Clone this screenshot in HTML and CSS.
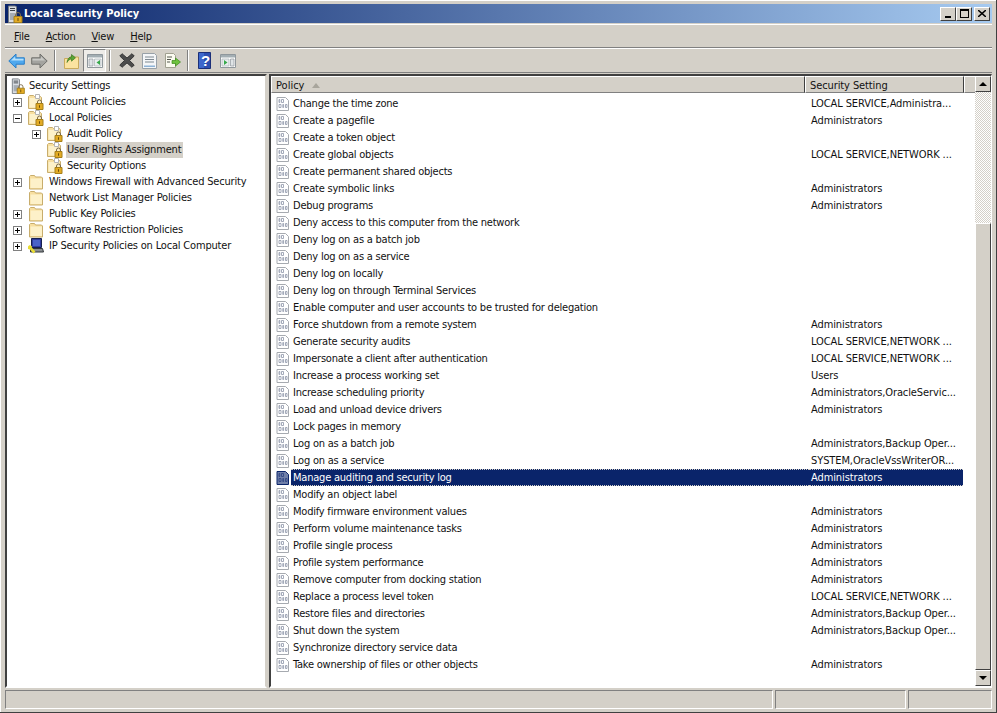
FILE: index.html
```html
<!DOCTYPE html>
<html lang="en">
<head>
  <meta charset="UTF-8" />
  <title>Local Security Policy</title>
  <link rel="stylesheet" href="styles.css">
</head>
<body>

  <!-- icon set -->
  <svg class="defs" width="0" height="0">
    <symbol id="i-folder" viewBox="0 0 16 16">
      <path d="M1.500 15V2.500l1-1h4l1 1.500h6l1 1V15z" fill="#f8dfa0" stroke="#c8ad6c"/>
      <path d="M2.500 4.500h11.500v9.500H2.500z" fill="#fdf1c9"/>
    </symbol>
    <symbol id="i-lockfolder" viewBox="0 0 16 16">
      <path d="M.5 14.500V2.500l1-1h4l1 1h6l1 1V14.500z" fill="#f8dfa0" stroke="#c8ad6c"/>
      <path d="M1.500 4h11v9.500h-11z" fill="#fdf1c9"/>
      <path d="M7.500.5h4v4h-4z" fill="#fff" stroke="#b5b5b5"/>
      <path d="M9.500 9.500V8a2 2 0 0 1 4 0v1.500" fill="none" stroke="#7a6a4c"/>
      <path d="M8 9.500h7v6H8z" fill="#e3ab24" stroke="#a57f1a"/>
      <path d="M11 11.300h1v2.500h-1z" fill="#6d4e08"/>
    </symbol>
    <symbol id="i-server" viewBox="0 0 16 18">
      <path d="M.5 1h7l1 1v14l-1 1.500h-7z" fill="#d9dde3" stroke="#73797f"/>
      <path d="M2 3.500h5M2 5.500h5" stroke="#3b4046"/>
      <path d="M2 8h5v7H2z" fill="#a6adb5"/>
      <path d="M7.500 11.500V10a2.500 2.500 0 0 1 5 0v1.500" fill="none" stroke="#7a6a4c"/>
      <path d="M6 11.500h8v6H6z" fill="#e3ab24" stroke="#a57f1a"/>
      <path d="M9.500 13h1v3h-1z" fill="#6d4e08"/>
    </symbol>
    <symbol id="i-ipsec" viewBox="0 0 16 16">
      <path d="M3.500.5h10v9h-10z" fill="#2f3b9f" stroke="#16204f"/>
      <path d="M5 2h7v6H5z" fill="#4a63c8"/>
      <path d="M2.500 10.500h12l1 3.500h-13z" fill="#8a8e92" stroke="#33373a"/>
      <path d="M.5 8l6 6.500" stroke="#e8dc34" stroke-width="2.600"/>
      <path d="M.5 11l3-3" stroke="#e8dc34" stroke-width="2"/>
    </symbol>
    <symbol id="i-policy" viewBox="0 0 16 16">
      <path d="M2 1.500h8.500l3 3v10H2z" fill="var(--page, #fff)" stroke="var(--edge, #a6aab0)"/>
      <path d="M4 3.500h.8v3H4zM6.500 3.500h2v3h-2zM4 8.500h2v3H4zM7.800 8.500h.8v3h-.8zM10.500 8.500h1.500v3h-1.500z" fill="none" stroke="var(--ink, #8d95a8)" stroke-width=".8"/>
    </symbol>
    <symbol id="i-back" viewBox="0 0 17 16">
      <path d="M.8 8L8 1v3.800h8.300v6.400H8V15z" fill="#4fa8ee" stroke="#2a7fc8"/>
      <path d="M3 7.500L7.200 3.500v2.200h8.300v1.800z" fill="#b5e0fb"/>
    </symbol>
    <symbol id="i-forward" viewBox="0 0 17 16">
      <path d="M16.200 8L9 1v3.800H.7v6.400H9V15z" fill="#a3a39f" stroke="#6f6f6b"/>
      <path d="M10 3.500v2.200H1.500v1.800h12.500z" fill="#c9c9c5"/>
    </symbol>
    <symbol id="i-up" viewBox="0 0 15 16">
      <path d="M.5 15.500V5.500h4L6 4h8.500v11.500z" fill="#fbe3a0" stroke="#c9aa5c"/>
      <path d="M3 9.500c.4-3.500 2-5.500 4.500-5.500V1.500l4 3.300-4 3.400V6C5.500 6 4 7.500 3 9.500z" fill="#5aa638" stroke="#2c6d14" stroke-width=".6"/>
    </symbol>
    <symbol id="i-tree" viewBox="0 0 16 14">
      <path d="M.5.500h15v13H.5z" fill="#fff" stroke="#8f979c"/>
      <path d="M1 1h14v2.500H1z" fill="#a3aeb3"/>
      <path d="M2 5h4v7H2z" fill="#dfe4e6" stroke="#8f979c" stroke-width=".7"/>
      <path d="M7.500 5H14v7H7.500z" fill="#e9edef" stroke="#a9b1b5" stroke-width=".7"/>
      <path d="M13 6v5l-3.500-2.500z" fill="#37a84a"/>
    </symbol>
    <symbol id="i-delete" viewBox="0 0 16 15">
      <path d="M.8 3L3 .7 8 5l5-4.300L15.200 3 10.500 7.500l4.700 4.500-2.200 2.300-5-4.400-5 4.400L.8 12l4.700-4.500z" fill="#4c4c4c" stroke="#383838"/>
    </symbol>
    <symbol id="i-props" viewBox="0 0 15 16">
      <path d="M.5.500h12l2 2v13H.5z" fill="#f4f6f8" stroke="#98a1a8"/>
      <path d="M3 4h9M3 6.500h9M3 9h9" stroke="#7f8a92"/>
      <path d="M2 12.500h11V14H2z" fill="#8eb3d6"/>
    </symbol>
    <symbol id="i-export" viewBox="0 0 16 16">
      <path d="M.5.500h8l2 2v12H.5z" fill="#fbfaf0" stroke="#a0a090"/>
      <path d="M2 4h5M2 6.500h4M2 9h3" stroke="#55584f"/>
      <path d="M7 7.500h3.500V5l5 4-5 4v-2.500H7z" fill="#6ec23e" stroke="#3c8a1a" stroke-width=".7"/>
    </symbol>
    <symbol id="i-help" viewBox="0 0 13 17">
      <path d="M.5.500h12v16H.5z" fill="#2c4fb0" stroke="#1b2f78"/>
      <path d="M1 1h5v15H1z" fill="#3d67cc"/>
    </symbol>
    <symbol id="i-pane" viewBox="0 0 16 14">
      <path d="M.5.500h15v13H.5z" fill="#fff" stroke="#8f979c"/>
      <path d="M1 1h14v2.500H1z" fill="#a3aeb3"/>
      <path d="M2 5h7v7H2z" fill="#e9edef" stroke="#a9b1b5" stroke-width=".7"/>
      <path d="M10.500 5H14v7h-3.500z" fill="#dfe4e6" stroke="#8f979c" stroke-width=".7"/>
      <path d="M4 6v5l3.500-2.500z" fill="#37a84a"/>
    </symbol>
  </svg>

  <div class="window">

    <div class="titlebar">
      <svg class="title-icon" width="16" height="18"><use href="#i-server"/></svg>
      <span class="title-text">Local Security Policy</span>
      <div class="caption-btns">
        <button class="cap"><span class="cap-min"></span></button>
        <button class="cap"><span class="cap-max"></span></button>
        <button class="cap cap-close">
          <svg width="8" height="7"><path d="M0 0l8 7M8 0L0 7" stroke="#000" stroke-width="1.500"/></svg>
        </button>
      </div>
    </div>

    <div class="menubar">
      <span class="menu"><u>F</u>ile</span>
      <span class="menu"><u>A</u>ction</span>
      <span class="menu"><u>V</u>iew</span>
      <span class="menu"><u>H</u>elp</span>
    </div>

    <div class="toolbar">
      <span class="tool"><svg width="17" height="16"><use href="#i-back"/></svg></span>
      <span class="tool"><svg width="17" height="16"><use href="#i-forward"/></svg></span>
      <span class="sep"></span>
      <span class="tool"><svg width="15" height="16"><use href="#i-up"/></svg></span>
      <span class="tool active"><svg width="16" height="14"><use href="#i-tree"/></svg></span>
      <span class="sep"></span>
      <span class="tool"><svg width="16" height="15"><use href="#i-delete"/></svg></span>
      <span class="tool"><svg width="15" height="16"><use href="#i-props"/></svg></span>
      <span class="tool"><svg width="16" height="16"><use href="#i-export"/></svg></span>
      <span class="sep"></span>
      <span class="tool"><svg width="13" height="17"><use href="#i-help"/></svg><b class="help-q">?</b></span>
      <span class="tool"><svg width="16" height="14"><use href="#i-pane"/></svg></span>
    </div>

    <div class="panes">
      <!-- left tree -->
      <div class="tree">
        <div class="tree-row lvl-0"><svg class="tree-icon" width="16" height="16"><use href="#i-server"/></svg><span class="tree-label">Security Settings</span></div>
        <div class="tree-row"><span class="exp plus"></span><svg class="tree-icon" width="16" height="16"><use href="#i-lockfolder"/></svg><span class="tree-label">Account Policies</span></div>
        <div class="tree-row"><span class="exp"></span><svg class="tree-icon" width="16" height="16"><use href="#i-lockfolder"/></svg><span class="tree-label">Local Policies</span></div>
        <div class="tree-row lvl-2"><span class="exp plus"></span><svg class="tree-icon" width="16" height="16"><use href="#i-lockfolder"/></svg><span class="tree-label">Audit Policy</span></div>
        <div class="tree-row lvl-2"><span class="exp none"></span><svg class="tree-icon" width="16" height="16"><use href="#i-lockfolder"/></svg><span class="tree-label current">User Rights Assignment</span></div>
        <div class="tree-row lvl-2"><span class="exp none"></span><svg class="tree-icon" width="16" height="16"><use href="#i-lockfolder"/></svg><span class="tree-label">Security Options</span></div>
        <div class="tree-row"><span class="exp plus"></span><svg class="tree-icon" width="16" height="16"><use href="#i-folder"/></svg><span class="tree-label">Windows Firewall with Advanced Security</span></div>
        <div class="tree-row"><span class="exp none"></span><svg class="tree-icon" width="16" height="16"><use href="#i-folder"/></svg><span class="tree-label">Network List Manager Policies</span></div>
        <div class="tree-row"><span class="exp plus"></span><svg class="tree-icon" width="16" height="16"><use href="#i-folder"/></svg><span class="tree-label">Public Key Policies</span></div>
        <div class="tree-row"><span class="exp plus"></span><svg class="tree-icon" width="16" height="16"><use href="#i-folder"/></svg><span class="tree-label">Software Restriction Policies</span></div>
        <div class="tree-row"><span class="exp plus"></span><svg class="tree-icon" width="16" height="16"><use href="#i-ipsec"/></svg><span class="tree-label">IP Security Policies on Local Computer</span></div>
      </div>

      <!-- right list -->
      <div class="list-pane">
        <div class="list-main">
          <div class="list-head">
            <div class="head-cell head-policy">Policy <span class="sort"></span></div>
            <div class="head-cell head-setting">Security Setting</div>
            <div class="head-fill"></div>
          </div>
          <div class="list-rows">
            <div class="row"><svg width="16" height="16"><use href="#i-policy"/></svg><span class="col-name">Change the time zone</span><span class="col-setting">LOCAL SERVICE,Administra...</span></div>
            <div class="row"><svg width="16" height="16"><use href="#i-policy"/></svg><span class="col-name">Create a pagefile</span><span class="col-setting">Administrators</span></div>
            <div class="row"><svg width="16" height="16"><use href="#i-policy"/></svg><span class="col-name">Create a token object</span><span class="col-setting"></span></div>
            <div class="row"><svg width="16" height="16"><use href="#i-policy"/></svg><span class="col-name">Create global objects</span><span class="col-setting">LOCAL SERVICE,NETWORK ...</span></div>
            <div class="row"><svg width="16" height="16"><use href="#i-policy"/></svg><span class="col-name">Create permanent shared objects</span><span class="col-setting"></span></div>
            <div class="row"><svg width="16" height="16"><use href="#i-policy"/></svg><span class="col-name">Create symbolic links</span><span class="col-setting">Administrators</span></div>
            <div class="row"><svg width="16" height="16"><use href="#i-policy"/></svg><span class="col-name">Debug programs</span><span class="col-setting">Administrators</span></div>
            <div class="row"><svg width="16" height="16"><use href="#i-policy"/></svg><span class="col-name">Deny access to this computer from the network</span><span class="col-setting"></span></div>
            <div class="row"><svg width="16" height="16"><use href="#i-policy"/></svg><span class="col-name">Deny log on as a batch job</span><span class="col-setting"></span></div>
            <div class="row"><svg width="16" height="16"><use href="#i-policy"/></svg><span class="col-name">Deny log on as a service</span><span class="col-setting"></span></div>
            <div class="row"><svg width="16" height="16"><use href="#i-policy"/></svg><span class="col-name">Deny log on locally</span><span class="col-setting"></span></div>
            <div class="row"><svg width="16" height="16"><use href="#i-policy"/></svg><span class="col-name">Deny log on through Terminal Services</span><span class="col-setting"></span></div>
            <div class="row"><svg width="16" height="16"><use href="#i-policy"/></svg><span class="col-name">Enable computer and user accounts to be trusted for delegation</span><span class="col-setting"></span></div>
            <div class="row"><svg width="16" height="16"><use href="#i-policy"/></svg><span class="col-name">Force shutdown from a remote system</span><span class="col-setting">Administrators</span></div>
            <div class="row"><svg width="16" height="16"><use href="#i-policy"/></svg><span class="col-name">Generate security audits</span><span class="col-setting">LOCAL SERVICE,NETWORK ...</span></div>
            <div class="row"><svg width="16" height="16"><use href="#i-policy"/></svg><span class="col-name">Impersonate a client after authentication</span><span class="col-setting">LOCAL SERVICE,NETWORK ...</span></div>
            <div class="row"><svg width="16" height="16"><use href="#i-policy"/></svg><span class="col-name">Increase a process working set</span><span class="col-setting">Users</span></div>
            <div class="row"><svg width="16" height="16"><use href="#i-policy"/></svg><span class="col-name">Increase scheduling priority</span><span class="col-setting">Administrators,OracleServic...</span></div>
            <div class="row"><svg width="16" height="16"><use href="#i-policy"/></svg><span class="col-name">Load and unload device drivers</span><span class="col-setting">Administrators</span></div>
            <div class="row"><svg width="16" height="16"><use href="#i-policy"/></svg><span class="col-name">Lock pages in memory</span><span class="col-setting"></span></div>
            <div class="row"><svg width="16" height="16"><use href="#i-policy"/></svg><span class="col-name">Log on as a batch job</span><span class="col-setting">Administrators,Backup Oper...</span></div>
            <div class="row"><svg width="16" height="16"><use href="#i-policy"/></svg><span class="col-name">Log on as a service</span><span class="col-setting">SYSTEM,OracleVssWriterOR...</span></div>
            <div class="row selected"><svg width="16" height="16"><use href="#i-policy"/></svg><span class="col-name">Manage auditing and security log</span><span class="col-setting">Administrators</span></div>
            <div class="row"><svg width="16" height="16"><use href="#i-policy"/></svg><span class="col-name">Modify an object label</span><span class="col-setting"></span></div>
            <div class="row"><svg width="16" height="16"><use href="#i-policy"/></svg><span class="col-name">Modify firmware environment values</span><span class="col-setting">Administrators</span></div>
            <div class="row"><svg width="16" height="16"><use href="#i-policy"/></svg><span class="col-name">Perform volume maintenance tasks</span><span class="col-setting">Administrators</span></div>
            <div class="row"><svg width="16" height="16"><use href="#i-policy"/></svg><span class="col-name">Profile single process</span><span class="col-setting">Administrators</span></div>
            <div class="row"><svg width="16" height="16"><use href="#i-policy"/></svg><span class="col-name">Profile system performance</span><span class="col-setting">Administrators</span></div>
            <div class="row"><svg width="16" height="16"><use href="#i-policy"/></svg><span class="col-name">Remove computer from docking station</span><span class="col-setting">Administrators</span></div>
            <div class="row"><svg width="16" height="16"><use href="#i-policy"/></svg><span class="col-name">Replace a process level token</span><span class="col-setting">LOCAL SERVICE,NETWORK ...</span></div>
            <div class="row"><svg width="16" height="16"><use href="#i-policy"/></svg><span class="col-name">Restore files and directories</span><span class="col-setting">Administrators,Backup Oper...</span></div>
            <div class="row"><svg width="16" height="16"><use href="#i-policy"/></svg><span class="col-name">Shut down the system</span><span class="col-setting">Administrators,Backup Oper...</span></div>
            <div class="row"><svg width="16" height="16"><use href="#i-policy"/></svg><span class="col-name">Synchronize directory service data</span><span class="col-setting"></span></div>
            <div class="row"><svg width="16" height="16"><use href="#i-policy"/></svg><span class="col-name">Take ownership of files or other objects</span><span class="col-setting">Administrators</span></div>
          </div>
        </div>
        <div class="scrollbar">
          <div class="sb-btn"><span class="arrow-up"></span></div>
          <div class="sb-track"></div>
          <div class="sb-thumb"></div>
          <div class="sb-btn"><span class="arrow-down"></span></div>
        </div>
      </div>
    </div>

    <div class="statusbar">
      <div class="status status-a"></div>
      <div class="status status-b"></div>
      <div class="status status-c"></div>
    </div>
  </div>

</body>
</html>
```

FILE: styles.css
```css
html, body {
  margin: 0;
  padding: 0;
  height: 100%;
  overflow: hidden;
}

body {
  font-family: "DejaVu Sans Condensed", "DejaVu Sans", sans-serif;
  font-size: 11px;
  color: #111;
  background-color: #d4d0c8;
}

.defs {
  position: absolute;
}

svg {
  display: block;
}

.window {
  box-sizing: border-box;
  width: 997px;
  height: 713px;
  padding: 4px 4px 3px 5px;
  display: flex;
  flex-direction: column;
  background-color: #d4d0c8;
  border-right: 1px solid #404040;
  border-bottom: 1px solid #404040;
  box-shadow: inset 1px 1px 0 #fff;
}

/* title bar */
.titlebar {
  height: 19px;
  flex: none;
  display: flex;
  align-items: center;
  padding: 0 2px 0 3px;
  background: linear-gradient(to right, #0a246a, #a6caf0);
}

.title-text {
  color: #fff;
  font-weight: bold;
  font-size: 11px;
}

.caption-btns {
  margin-left: auto;
  display: flex;
}

.cap {
  box-sizing: border-box;
  width: 16px;
  height: 14px;
  padding: 0;
  display: flex;
  align-items: center;
  justify-content: center;
  background-color: #d4d0c8;
  border: 1px solid;
  border-color: #fff #404040 #404040 #fff;
}

.cap-close {
  margin-left: 2px;
}

.cap-min {
  width: 6px;
  height: 2px;
  margin-top: 7px;
  background-color: #000;
}

.cap-max {
  box-sizing: border-box;
  width: 9px;
  height: 9px;
  border: 1px solid #000;
  border-top-width: 2px;
}

/* menu and toolbar */
.menubar {
  box-sizing: border-box;
  height: 24px;
  flex: none;
  margin-top: 1px;
  display: flex;
  align-items: center;
  padding-left: 9px;
  border-top: 1px solid #fff;
  border-bottom: 1px solid #808080;
}

.menu {
  margin-right: 16px;
  letter-spacing: -0.2px;
}

.toolbar {
  box-sizing: border-box;
  height: 25px;
  flex: none;
  display: flex;
  align-items: center;
  border-top: 1px solid #fff;
  border-bottom: 1px solid #808080;
}

.tool {
  position: relative;
  width: 23px;
  height: 23px;
  display: flex;
  align-items: center;
  justify-content: center;
}

.tool.active {
  box-sizing: border-box;
  border: 1px solid;
  border-color: #808080 #fff #fff #808080;
  background-color: #eeece8;
}

.help-q {
  position: absolute;
  left: 8px;
  top: 3px;
  color: #fff;
  font-family: "Liberation Sans", Arial, sans-serif;
  font-size: 15px;
  line-height: 17px;
}

.sep {
  width: 1px;
  height: 21px;
  margin: 0 4px 0 3px;
  background-color: #808080;
  border-right: 1px solid #fff;
}

/* panes */
.panes {
  flex: 1;
  min-height: 0;
  display: flex;
  margin-top: 1px;
}

.tree {
  box-sizing: border-box;
  width: 262px;
  flex: none;
  padding-top: 2px;
  background-color: #fff;
  border: 2px solid;
  border-color: #404040 #d4d0c8 #fff #404040;
  overflow: hidden;
}

.tree-row {
  height: 16px;
  display: flex;
  align-items: center;
}

.exp {
  box-sizing: border-box;
  width: 9px;
  height: 9px;
  flex: none;
  margin: 0 6px;
  position: relative;
  border: 1px solid #808080;
  background-color: #fff;
}

.exp::before {
  content: "";
  position: absolute;
  left: 1px;
  top: 3px;
  width: 5px;
  height: 1px;
  background-color: #000;
}

.exp.plus::after {
  content: "";
  position: absolute;
  left: 3px;
  top: 1px;
  width: 1px;
  height: 5px;
  background-color: #000;
}

.exp.none {
  visibility: hidden;
}

.tree-icon {
  flex: none;
  margin-right: 3px;
}

.lvl-0 {
  padding-left: 4px;
}

.lvl-0 .tree-icon {
  margin-right: 0;
}

.lvl-2 {
  padding-left: 19px;
}

.tree-label {
  padding: 0 2px;
  line-height: 16px;
  white-space: nowrap;
  letter-spacing: -0.18px;
}

.lvl-2 .tree-label {
  padding-left: 1px;
}

.tree-label.current {
  background-color: #d4d0c8;
}

.list-pane {
  box-sizing: border-box;
  flex: 1;
  min-width: 0;
  margin-left: 2px;
  display: flex;
  background-color: #fff;
  border: 2px solid;
  border-color: #404040 #fff #fff #404040;
  border-right-width: 1px;
}

.list-main {
  flex: 1;
  min-width: 0;
  display: flex;
  flex-direction: column;
}

.list-head {
  height: 17px;
  flex: none;
  display: flex;
  background-color: #d4d0c8;
}

.head-cell {
  box-sizing: border-box;
  display: flex;
  align-items: center;
  height: 17px;
  padding-top: 2px;
  padding-left: 4px;
  border-top: 1px solid #fff;
  border-left: 1px solid #fff;
  border-right: 1px solid #404040;
  border-bottom: 1px solid #808080;
}

.head-policy {
  width: 534px;
}

.head-setting {
  width: 159px;
  letter-spacing: -0.1px;
}

.head-fill {
  flex: 1;
  border-top: 1px solid #fff;
  border-left: 1px solid #fff;
  border-bottom: 1px solid #808080;
}

.sort {
  width: 0;
  height: 0;
  margin-left: 8px;
  border-left: 4px solid transparent;
  border-right: 4px solid transparent;
  border-bottom: 5px solid #a8a59c;
}

.list-rows {
  padding-top: 2px;
}

.row {
  height: 17px;
  display: flex;
  align-items: center;
  padding-left: 4px;
  white-space: nowrap;
}

.row svg {
  flex: none;
}

.col-name {
  box-sizing: border-box;
  width: 518px;
  padding-left: 2px;
  line-height: 17px;
  flex: none;
  letter-spacing: -0.22px;
}

.col-setting {
  box-sizing: border-box;
  width: 154px;
  padding-left: 2px;
  line-height: 17px;
  flex: none;
  letter-spacing: -0.1px;
}

.row.selected {
  --page: #6f7fa8;
  --edge: #0a246a;
  --ink: #2a3f80;
}

.row.selected .col-name,
.row.selected .col-setting {
  line-height: 15px;
  background-color: #0a246a;
  color: #fff;
  border-top: 1px dotted #d4d0c8;
  border-bottom: 1px dotted #d4d0c8;
}

/* scroll bar */
.scrollbar {
  width: 16px;
  flex: none;
  display: flex;
  flex-direction: column;
}

.sb-btn {
  box-sizing: border-box;
  width: 16px;
  height: 16px;
  flex: none;
  display: flex;
  align-items: center;
  justify-content: center;
  background-color: #d4d0c8;
  border: 1px solid;
  border-color: #fff #404040 #404040 #fff;
}

.arrow-up {
  border-left: 4px solid transparent;
  border-right: 4px solid transparent;
  border-bottom: 4px solid #000;
}

.arrow-down {
  border-left: 4px solid transparent;
  border-right: 4px solid transparent;
  border-top: 4px solid #000;
}

.sb-track {
  height: 131px;
  flex: none;
  background-image: repeating-conic-gradient(#d4d0c8 0 25%, #fff 0 50%);
  background-size: 2px 2px;
}

.sb-thumb {
  box-sizing: border-box;
  flex: 1;
  background-color: #d4d0c8;
  border: 1px solid;
  border-color: #fff #404040 #404040 #fff;
}

/* status bar */
.statusbar {
  height: 19px;
  flex: none;
  display: flex;
  gap: 2px;
  margin-top: 2px;
}

.status {
  box-sizing: border-box;
  border: 1px solid;
  border-color: #808080 #fff #fff #808080;
}

.status-a {
  width: 768px;
}

.status-b {
  width: 131px;
}

.status-c {
  flex: 1;
}
```
